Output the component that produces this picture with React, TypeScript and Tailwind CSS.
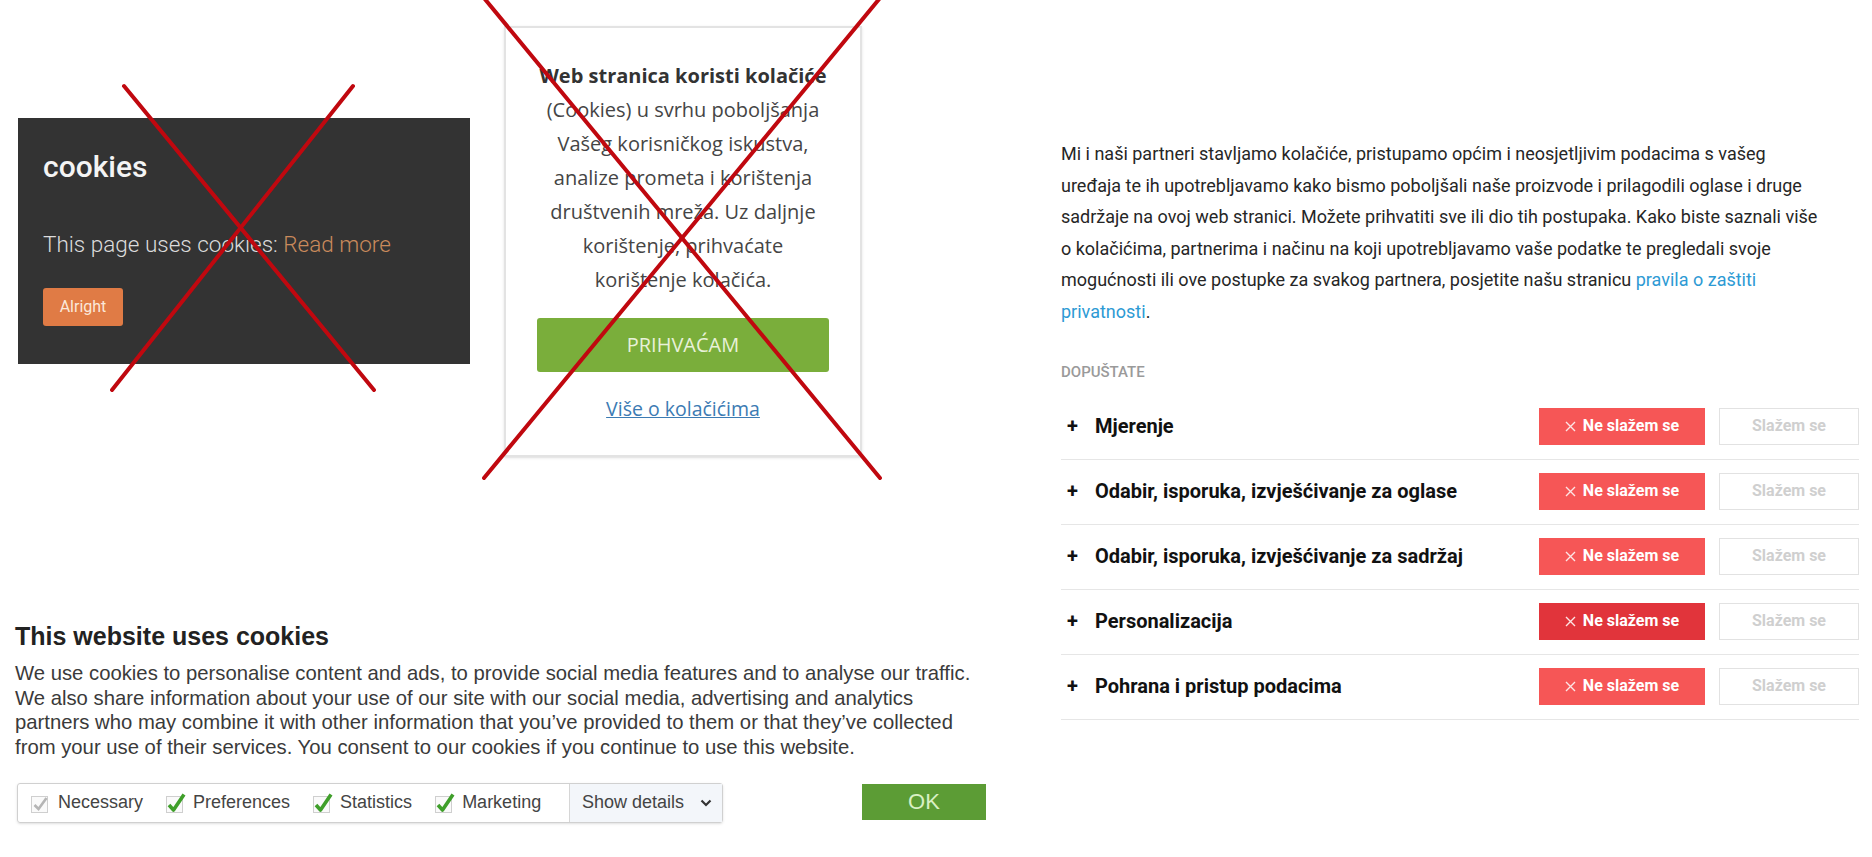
import React from "react";

const rows = [
  { label: "Mjerenje", dark: false },
  { label: "Odabir, isporuka, izvješćivanje za oglase", dark: false },
  { label: "Odabir, isporuka, izvješćivanje za sadržaj", dark: false },
  { label: "Personalizacija", dark: true },
  { label: "Pohrana i pristup podacima", dark: false },
];

function Check({ on }: { on: boolean }) {
  return (
    <svg width="22" height="22" viewBox="0 0 22 22" className="shrink-0">
      <rect x="1.5" y="4.5" width="16" height="16" fill="#fafafa" stroke="#cfcfcf" />
      {on ? (
        <path d="M4 13 L8.5 18 L19 2.5" fill="none" stroke="#3f9f2a" strokeWidth="3.6" strokeLinejoin="round" />
      ) : (
        <path d="M4.5 13 L8.5 17 L16.5 6" fill="none" stroke="#b5b5b5" strokeWidth="2.6" />
      )}
    </svg>
  );
}

function DarkBanner() {
  return (
    <div className="mt-[118px] w-[452px] h-[246px] bg-[#333333] pl-[25px] pt-[31px] font-['Roboto',sans-serif] shrink-0">
      <h2 className="text-[30px] leading-[36px] font-medium text-[#f4f4f4]">cookies</h2>
      <p className="mt-[44px] text-[22.5px] leading-[30px] font-light text-[#dcdcdc]">
        This page uses cookies: <span className="text-[#c98a5c]">Read more</span>
      </p>
      <button
        type="button"
        className="mt-[29px] w-[80px] h-[38px] rounded-[3px] bg-[#e07b45] text-[16px] text-[#fbe8da]"
      >
        Alright
      </button>
    </div>
  );
}

function CroatianBox() {
  return (
    <div className="mt-[26px] w-[358px] h-[431px] border-2 border-[#e3e3e3] shadow-sm bg-white shrink-0 flex flex-col items-center pt-[31px] font-['Open_Sans',sans-serif] text-[20px] leading-[34px] text-[#454545] text-center">
      <p className="whitespace-nowrap">
        <b className="text-[#333]">Web stranica koristi kolačiće</b>
        <br />
        (Cookies) u svrhu poboljšanja
        <br />
        Vašeg korisničkog iskustva,
        <br />
        analize prometa i korištenja
        <br />
        društvenih mreža. Uz daljnje
        <br />
        korištenje, prihvaćate
        <br />
        korištenje kolačića.
      </p>
      <button
        type="button"
        className="mt-[21px] w-[292px] h-[54px] rounded-[3px] bg-[#7aae3b] text-[20px] text-[#e8f1d9]"
      >
        PRIHVAĆAM
      </button>
      <a className="mt-[20px] text-[19.5px] text-[#3c7bb3] underline">Više o kolačićima</a>
    </div>
  );
}

function EnglishBanner() {
  return (
    <div className="mt-[164px] pl-[15px] font-['Liberation_Sans',Arial,sans-serif]">
      <h2 className="text-[25px] leading-[30px] font-bold text-[#222]">This website uses cookies</h2>
      <p className="mt-[10px] text-[20.3px] leading-[24.7px] text-[#3a3a3a] whitespace-nowrap">
        We use cookies to personalise content and ads, to provide social media features and to analyse our traffic.
        <br />
        We also share information about your use of our site with our social media, advertising and analytics
        <br />
        partners who may combine it with other information that you’ve provided to them or that they’ve collected
        <br />
        from your use of their services. You consent to our cookies if you continue to use this website.
      </p>
      <div className="mt-[23px] flex items-start">
        <div className="ml-[2px] w-[706px] h-[40px] flex items-stretch border border-[#d0d0d0] rounded-[3px] shadow-sm text-[18px] text-[#444]">
          <div className="flex items-center pl-[12px] pr-[18px] gap-[22px] flex-1">
            {[
              ["Necessary", false],
              ["Preferences", true],
              ["Statistics", true],
              ["Marketing", true],
            ].map(([l, on]) => (
              <label key={l as string} className="flex items-center gap-[6px]">
                <Check on={on as boolean} />
                <span>{l as string}</span>
              </label>
            ))}
          </div>
          <div className="flex items-center gap-[16px] pl-[12px] pr-[10px] border-l border-[#d6d6d6] bg-[#f3f6fa]">
            <span>Show details</span>
            <svg width="12" height="8" viewBox="0 0 12 8">
              <path d="M1.5 1.5 L6 6 L10.5 1.5" fill="none" stroke="#333" strokeWidth="2.2" />
            </svg>
          </div>
        </div>
        <button
          type="button"
          className="ml-[139px] mt-[1px] w-[124px] h-[36px] bg-[#5c9c35] text-[22px] text-[#d9f0c4]"
        >
          OK
        </button>
      </div>
    </div>
  );
}

function ConsentPanel() {
  return (
    <div className="pl-[21px] pt-[138px] font-['Roboto',sans-serif] w-[819px]">
      <p className="text-[18px] leading-[31.6px] text-[#262626] whitespace-nowrap">
        Mi i naši partneri stavljamo kolačiće, pristupamo općim i neosjetljivim podacima s vašeg
        <br />
        uređaja te ih upotrebljavamo kako bismo poboljšali naše proizvode i prilagodili oglase i druge
        <br />
        sadržaje na ovoj web stranici. Možete prihvatiti sve ili dio tih postupaka. Kako biste saznali više
        <br />
        o kolačićima, partnerima i načinu na koji upotrebljavamo vaše podatke te pregledali svoje
        <br />
        mogućnosti ili ove postupke za svakog partnera, posjetite našu stranicu{" "}
        <a className="text-[#2d9ad4]">pravila o zaštiti</a>
        <br />
        <a className="text-[#2d9ad4]">privatnosti</a>.
      </p>
      <div className="mt-[34px] text-[15px] leading-[20px] font-medium text-[#9a9a9a]">DOPUŠTATE</div>
      <div className="mt-[13px] w-[798px]">
        {rows.map((r) => (
          <div key={r.label} className="h-[65px] flex items-center border-b border-[#e6e6e6] pb-px">
            <span className="w-[34px] pl-[6px] text-[20px] font-bold text-[#111]">+</span>
            <span className="flex-1 text-[20px] font-bold text-[#111]">{r.label}</span>
            <button
              type="button"
              className={
                "w-[166px] h-[37px] flex items-center justify-center gap-[7px] text-[16px] font-bold text-white " +
                (r.dark ? "bg-[#e1343b]" : "bg-[#f65656]")
              }
            >
              <svg width="11" height="11" viewBox="0 0 11 11">
                <path d="M1 1 L10 10 M10 1 L1 10" stroke="#fde4e4" strokeWidth="1.4" />
              </svg>
              <span>Ne slažem se</span>
            </button>
            <button
              type="button"
              className="ml-[14px] w-[140px] h-[37px] border border-[#e2e2e2] text-[16px] font-bold text-[#cfcfcf]"
            >
              Slažem se
            </button>
          </div>
        ))}
      </div>
    </div>
  );
}

export default function App() {
  return (
    <div className="relative w-[1872px] h-[857px] overflow-hidden bg-white flex">
      <div className="w-[1040px] shrink-0 flex flex-col">
        <div className="flex items-start pl-[18px] gap-[34px]">
          <DarkBanner />
          <CroatianBox />
        </div>
        <EnglishBanner />
      </div>
      <ConsentPanel />
      <svg
        className="absolute inset-0 pointer-events-none"
        width="1872"
        height="857"
        viewBox="0 0 1872 857"
      >
        <g stroke="#c0080f" strokeWidth="4" strokeLinecap="round">
          <line x1="124" y1="86" x2="374" y2="390" />
          <line x1="353" y1="86" x2="112" y2="390" />
          <line x1="484" y1="-2" x2="880" y2="478" />
          <line x1="880" y1="-2" x2="484" y2="478" />
        </g>
      </svg>
    </div>
  );
}
